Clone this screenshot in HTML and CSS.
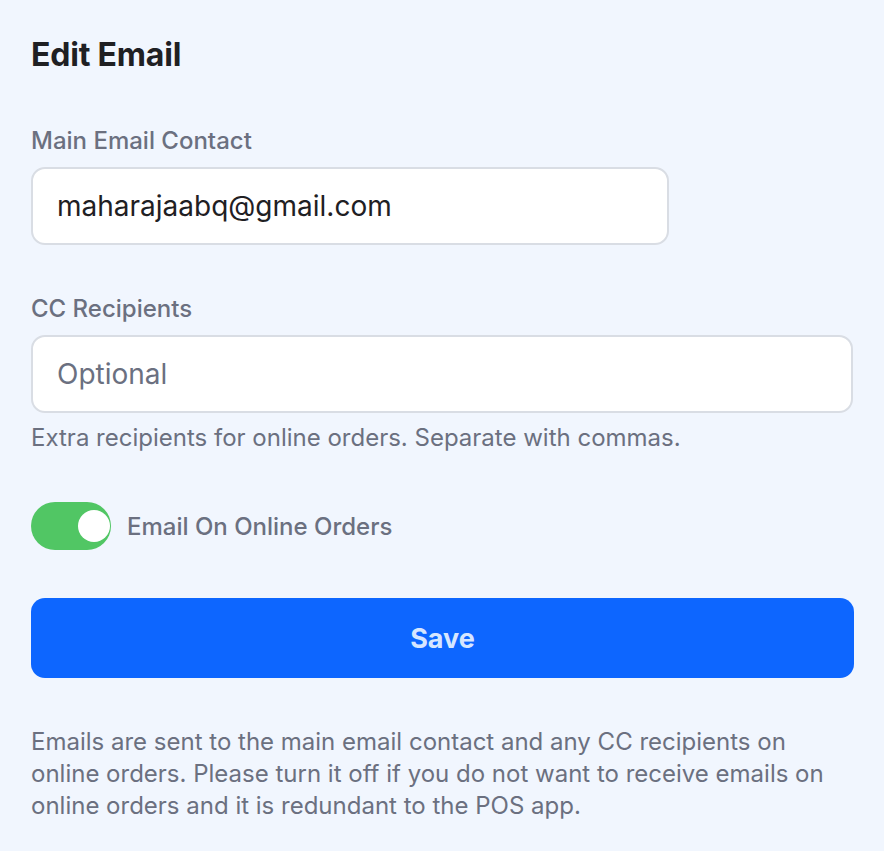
FILE: index.html
```html
<!DOCTYPE html>
<html>
<head>
<meta charset="utf-8">
<link rel="stylesheet" href="styles.css">
</head>
<body>
<div class="page">
  <h1 class="title">Edit Email</h1>
  <div class="field field-main">
    <label class="label">Main Email Contact</label>
    <div class="input input-short">maharajaabq@gmail.com</div>
  </div>
  <div class="field field-cc">
    <label class="label">CC Recipients</label>
    <div class="input input-full placeholder">Optional</div>
    <p class="helper">Extra recipients for online orders. Separate with commas.</p>
  </div>
  <div class="toggle-row">
    <span class="toggle"><span class="knob"></span></span>
    <span class="toggle-label">Email On Online Orders</span>
  </div>
  <button class="save">Save</button>
  <p class="note">Emails are sent to the main email contact and any CC recipients on online orders. Please turn it off if you do not want to receive emails on online orders and it is redundant to the POS app.</p>
</div>
</body>
</html>
```
FILE: styles.css
```css
html, body {
  margin: 0;
  padding: 0;
  background: #f1f6fe;
}
body {
  font-family: Inter, "Noto Sans", sans-serif;
  color: #1f2023;
}
.page {
  padding: 35px 30px 0 31px;
  width: 823px;
}
.title {
  margin: 0;
  font-size: 32px;
  font-weight: 700;
  line-height: 40px;
  letter-spacing: -0.2px;
}
.field-main {
  margin-top: 51px;
}
.field-cc {
  margin-top: 49px;
}
.label {
  display: block;
  font-size: 24px;
  font-weight: 500;
  color: #6b7080;
  line-height: 30px;
  margin-bottom: 11px;
}
.input {
  box-sizing: border-box;
  height: 78px;
  background: #fff;
  border: 2px solid #d9dde4;
  border-radius: 14px;
  padding: 0 24px;
  display: flex;
  align-items: center;
  font-size: 28px;
  color: #1f2023;
}
.input-short {
  width: 638px;
}
.input-full {
  width: 822px;
}
.placeholder {
  color: #6b7080;
}
.helper {
  margin: 10px 0 0 0;
  font-size: 24px;
  line-height: 30px;
  color: #6b7080;
}
.toggle-row {
  margin-top: 49px;
  display: flex;
  align-items: center;
  gap: 16px;
}
.toggle {
  width: 80px;
  height: 48px;
  border-radius: 24px;
  background: #51c664;
  display: flex;
  align-items: center;
  justify-content: flex-end;
  padding-right: 1px;
  box-sizing: border-box;
}
.knob {
  width: 32px;
  height: 32px;
  border-radius: 50%;
  background: #fff;
}
.toggle-label {
  font-size: 24px;
  font-weight: 500;
  color: #6b7080;
}
.save {
  margin-top: 48px;
  width: 823px;
  height: 80px;
  border: none;
  border-radius: 14px;
  background: #0d66ff;
  color: #d6e6ff;
  font-family: Inter, "Noto Sans", sans-serif;
  font-size: 27px;
  font-weight: 700;
  display: block;
}
.note {
  margin: 48px 0 0 0;
  font-size: 24px;
  line-height: 32px;
  color: #6b7080;
}
```
